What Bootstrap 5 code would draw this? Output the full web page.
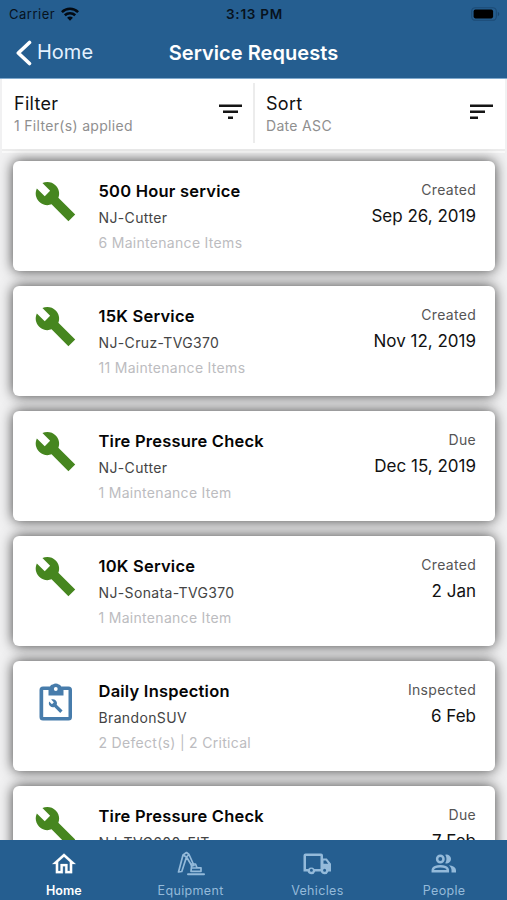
<!DOCTYPE html>
<html lang="en">
<head>
<meta charset="utf-8">
<meta name="viewport" content="width=device-width, initial-scale=1">
<title>Service Requests</title>
<link href="https://cdn.jsdelivr.net/npm/bootstrap@5.3.0/dist/css/bootstrap.min.css" rel="stylesheet">
<style>
  body { font-family: Inter, "Liberation Sans", sans-serif; background: #f1f1f2; color: #111; height: 900px; overflow: hidden; }
  svg { display: block; flex: none; }
  .app-top { background: #255e90; height: 79px; border-bottom: 1px solid #7fa9cd; }
  .status-row { height: 27px; padding: 0 7px 0 9px; color: #07121d; font-size: 13px; line-height: 28px; }
  .status-row > *, .title-row > * { flex: 1 1 0; }
  .carrier { letter-spacing: .5px; gap: 6px; }
  .clock { font-size: 13.5px; font-weight: 600; letter-spacing: .75px; }
  .title-row { height: 51px; padding: 0 16px; color: #fff; line-height: 51px; }
  .back-link { font-size: 20px; color: #e4f1ff; }
  .page-title { font-size: 20px; font-weight: 600; letter-spacing: .05px; padding-top: 1px; flex: none !important; }
  .tools { height: 70px; margin: 0 2px; background: #fff; box-shadow: 0 2px 0 #ededed, 0 4px 0 #fafafa; padding-top: 4px; }
  .tool { height: 60px; padding: 9px 12px 0; }
  .tool:first-child { width: 251px; padding-right: 11px; }
  .tool + .tool { border-left: 2px solid #ececec; padding-left: 11px; flex: 1; }
  .tool-name { font-size: 18px; line-height: 23px; letter-spacing: .3px; }
  .tool-note { font-size: 14px; line-height: 22px; color: #8f8f8f; letter-spacing: .32px; }
  .tool svg { margin-top: 12px; }
  .feed { padding: 12px 12px 0 13px; gap: 15px; height: 691px; overflow: hidden; }
  .request { height: 110px; border: 0; border-radius: 6px; box-shadow: 0 0 13px rgba(0,0,0,.74); padding: 17px 19px 0 20px; flex: none; }
  .kind { width: 65.5px; padding: 2px 0 0 .5px; flex: none; }
  .name { font-size: 16.5px; font-weight: 600; line-height: 27px; color: #050505; letter-spacing: .22px; }
  .unit { font-size: 14px; line-height: 25px; color: #444; letter-spacing: .36px; }
  .items { font-size: 14px; line-height: 25px; color: #bcbcc0; letter-spacing: .3px; }
  .state { font-size: 14px; line-height: 23px; color: #555; letter-spacing: .3px; }
  .date { font-size: 17px; line-height: 30px; color: #111; }
  .tabs { height: 60px; background: #255e90; color: #94bada; font-size: 12.5px; line-height: 16px; }
  .tabs a { color: inherit; padding: 10px 0 0 1px; letter-spacing: .34px; }
  .tabs a.active { color: #fff; font-weight: 600; letter-spacing: .05px; }
  .tabs svg { height: 28px; margin-bottom: 5px; }
</style>
</head>
<body class="d-flex flex-column">
<svg width="0" height="0" class="position-absolute">
  <symbol id="wrench" viewBox="0 0 24 24"><path d="M23 19.300 13.600 9.900c.9-2.300.4-5-1.500-6.900-2-2-5-2.400-7.400-1.300L9 6 6 9 1.600 4.700C.4 7.100.9 10.100 2.900 12.100c1.900 1.900 4.600 2.400 6.900 1.500l9.400 9.400z"/></symbol>
</svg>
<header class="app-top flex-shrink-0">
  <div class="status-row d-flex">
    <div class="d-flex align-items-center carrier">Carrier
      <svg width="18" height="14" viewBox="0 0 18 14" fill="none" stroke="#030a12" stroke-width="2.600"><path d="M.9 5.100c4.600-4.400 11.600-4.400 16.200 0M3.800 8.300c3-2.800 7.400-2.800 10.400 0"/><path d="M6.100 10.700c1.700-1.500 4.100-1.500 5.800 0L9 13.800z" fill="#030a12" stroke="none"/></svg>
    </div>
    <div class="text-center clock">3:13 PM</div>
    <div class="d-flex align-items-center justify-content-end">
      <svg width="30" height="14" viewBox="0 0 30 14"><rect x="1.700" y=".7" width="24.600" height="12.600" rx="3.600" fill="none" stroke="#1c4b76" stroke-width="1.100"/><rect x="3.600" y="2.600" width="19.500" height="8.800" rx="1.800" fill="#000"/><path d="M27.800 4.800c2 .8 2 3.600 0 4.400z" fill="#17456f"/></svg>
    </div>
  </div>
  <div class="title-row d-flex">
    <a href="#" class="back-link d-flex align-items-center text-decoration-none"><svg class="me-1" width="17" height="26" viewBox="0 0 17 26" fill="none" stroke="#fff" stroke-width="3.600" stroke-linecap="round" stroke-linejoin="round"><path d="M13.500 2.500 2.300 13 13.500 23.500"/></svg><span>Home</span></a>
    <div class="page-title">Service Requests</div>
    <div></div>
  </div>
</header>
<section class="tools d-flex flex-shrink-0">
  <div class="tool d-flex justify-content-between">
    <div><div class="tool-name">Filter</div><div class="tool-note">1 Filter(s) applied</div></div>
    <svg width="23" height="16" viewBox="0 0 23 16" stroke="#151515" stroke-width="2.500"><path d="M0 1.800h23M4 7.800h15M9 13.800h5"/></svg>
  </div>
  <div class="tool d-flex justify-content-between">
    <div><div class="tool-name">Sort</div><div class="tool-note">Date ASC</div></div>
    <svg width="23" height="16" viewBox="0 0 23 16" stroke="#151515" stroke-width="2.500"><path d="M0 1.800h23M0 7.800h15M0 13.800h8"/></svg>
  </div>
</section>
<main class="feed d-flex flex-column">
  <article class="card request flex-row">
    <div class="kind"><svg width="43" height="43" fill="#46861f"><use href="#wrench"/></svg></div>
    <div class="flex-grow-1"><div class="name">500 Hour service</div><div class="unit">NJ-Cutter</div><div class="items">6 Maintenance Items</div></div>
    <div class="text-end"><div class="state">Created</div><div class="date">Sep 26, 2019</div></div>
  </article>
  <article class="card request flex-row">
    <div class="kind"><svg width="43" height="43" fill="#46861f"><use href="#wrench"/></svg></div>
    <div class="flex-grow-1"><div class="name">15K Service</div><div class="unit">NJ-Cruz-TVG370</div><div class="items">11 Maintenance Items</div></div>
    <div class="text-end"><div class="state">Created</div><div class="date">Nov 12, 2019</div></div>
  </article>
  <article class="card request flex-row">
    <div class="kind"><svg width="43" height="43" fill="#46861f"><use href="#wrench"/></svg></div>
    <div class="flex-grow-1"><div class="name">Tire Pressure Check</div><div class="unit">NJ-Cutter</div><div class="items">1 Maintenance Item</div></div>
    <div class="text-end"><div class="state">Due</div><div class="date">Dec 15, 2019</div></div>
  </article>
  <article class="card request flex-row">
    <div class="kind"><svg width="43" height="43" fill="#46861f"><use href="#wrench"/></svg></div>
    <div class="flex-grow-1"><div class="name">10K Service</div><div class="unit">NJ-Sonata-TVG370</div><div class="items">1 Maintenance Item</div></div>
    <div class="text-end"><div class="state">Created</div><div class="date">2 Jan</div></div>
  </article>
  <article class="card request flex-row">
    <div class="kind"><svg width="43" height="43" viewBox="0 0 43 43"><path fill="#477cab" fill-rule="evenodd" d="M9 6.500h7c.7-2.200 2.700-2 5.600-2s4.900-.2 5.600 2h7.300a3.500 3.500 0 0 1 3.500 3.500v27a3.500 3.500 0 0 1-3.500 3.500H9a3.500 3.500 0 0 1-3.500-3.500V10A3.500 3.500 0 0 1 9 6.500zM9.200 10V37H34.500V10H29.500V15.500H14.500V10z"/><circle cx="21.800" cy="8" r="4.400" fill="#477cab"/><circle cx="21.800" cy="9" r="1.900" fill="#fff"/><use href="#wrench" x="14.200" y="18.500" width="15" height="15" fill="#477cab"/></svg></div>
    <div class="flex-grow-1"><div class="name">Daily Inspection</div><div class="unit">BrandonSUV</div><div class="items">2 Defect(s) | 2 Critical</div></div>
    <div class="text-end"><div class="state">Inspected</div><div class="date">6 Feb</div></div>
  </article>
  <article class="card request flex-row">
    <div class="kind"><svg width="43" height="43" fill="#46861f"><use href="#wrench"/></svg></div>
    <div class="flex-grow-1"><div class="name">Tire Pressure Check</div><div class="unit">NJ-TVG600-FIT</div></div>
    <div class="text-end"><div class="state">Due</div><div class="date">7 Feb</div></div>
  </article>
</main>
<nav class="tabs d-flex flex-shrink-0">
  <a href="#" class="active w-25 d-flex flex-column align-items-center text-decoration-none"><svg width="28" viewBox="0 0 24 24" fill="currentColor" stroke="currentColor" stroke-width=".2"><path d="M12 5.700l5 4.500V18h-2v-6H9v6H7v-7.800l5-4.500M12 3 2 12h3v8h6v-6h2v6h6v-8h3z"/></svg>Home</a>
  <a href="#" class="w-25 d-flex flex-column align-items-center text-decoration-none"><svg width="28" viewBox="0 0 28 28" fill="none" stroke="currentColor" stroke-width="1.700" stroke-linejoin="round" stroke-linecap="round"><path d="M1.500 22 6 5 9.500 2.500 12 4.500 17 15.500l-2 .5L9.500 7 4.800 21.500zM6 5l3.500 2 2.500-2.500"/><path d="M14.500 16.500v-2.500h4l1.500 3.800h4v3.500H14zM14.500 18H20"/><path stroke-width="2" d="M11 24.300h16"/></svg>Equipment</a>
  <a href="#" class="w-25 d-flex flex-column align-items-center text-decoration-none"><svg width="30" viewBox="0 0 30 28"><path fill="currentColor" fill-rule="evenodd" d="M3.500 3.500h15.500a2 2 0 0 1 2 2V8.500h3.800L29 13.800v7.700h-2.600a4 4 0 0 1-7.600 0h-5.600a4 4 0 0 1-7.600 0H1.500v-16a2 2 0 0 1 2-2zM4 6v13h2.200a4 4 0 0 1 6.200 0h6.100V6zM21.500 10.500v3.300h4.700l-2.400-3.300zM9.400 18.800a1.500 1.500 0 1 0 0 3 1.500 1.500 0 0 0 0-3zm13.200 0a1.500 1.500 0 1 0 0 3 1.500 1.500 0 0 0 0-3z"/></svg>Vehicles</a>
  <a href="#" class="w-25 d-flex flex-column align-items-center text-decoration-none"><svg width="28" viewBox="0 0 28 28" fill="none" stroke="currentColor" stroke-width="2.500"><circle cx="10.300" cy="9" r="3.200"/><path d="M2.800 21.200v-1c0-2.800 4-4 7.500-4s7.500 1.200 7.500 4v1z"/><path fill="currentColor" stroke="none" d="M15.200 4.700a4.500 4.500 0 1 1 0 8.600c1.700-2.500 1.700-6.100 0-8.600zM18.800 15.200c3.800.5 7.200 2 7.200 5.200v2h-4.500v-2.300c0-2-1.100-3.700-2.700-4.900z"/></svg>People</a>
</nav>
<script src="https://cdn.jsdelivr.net/npm/bootstrap@5.3.0/dist/js/bootstrap.bundle.min.js"></script>
</body>
</html>
